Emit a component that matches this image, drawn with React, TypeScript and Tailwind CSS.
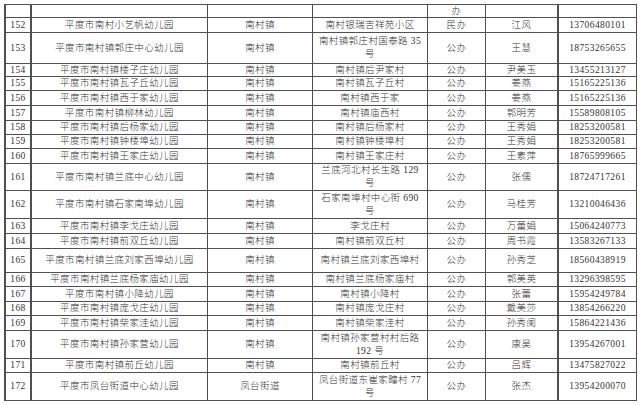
import React from "react";

type Row = {
  h: string;
  no: string;
  name: string;
  town: string;
  addr: React.ReactNode;
  type: string;
  head: string;
  phone: string;
};

const rows: Row[] = [
  { h: "h-[13px]", no: "", name: "", town: "", addr: "", type: "办", head: "", phone: "" },
  { h: "h-[15px]", no: "152", name: "平度市南村小艺帆幼儿园", town: "南村镇", addr: "南村银瑞吉祥苑小区", type: "民办", head: "江风", phone: "13706480101" },
  { h: "h-[31px]", no: "153", name: "平度市南村镇郭庄中心幼儿园", town: "南村镇", addr: <>南村镇郭庄村国泰路 35<br />号</>, type: "公办", head: "王慧", phone: "18753265655" },
  { h: "h-[13px]", no: "154", name: "平度市南村镇楼子庄幼儿园", town: "南村镇", addr: "南村镇后尹家村", type: "公办", head: "尹美玉", phone: "13455213127" },
  { h: "h-[14px]", no: "155", name: "平度市南村镇瓦子丘幼儿园", town: "南村镇", addr: "南村镇瓦子丘村", type: "公办", head: "姜燕", phone: "15165225136" },
  { h: "h-[15px]", no: "156", name: "平度市南村镇西于家幼儿园", town: "南村镇", addr: "南村镇西于家", type: "公办", head: "姜燕", phone: "15165225136" },
  { h: "h-[15px]", no: "157", name: "平度市南村镇柳林幼儿园", town: "南村镇", addr: "南村镇庙西村", type: "公办", head: "郭明芳", phone: "15589808105" },
  { h: "h-[14px]", no: "158", name: "平度市南村镇后杨家幼儿园", town: "南村镇", addr: "南村镇后杨家村", type: "公办", head: "王秀娟", phone: "18253200581" },
  { h: "h-[14px]", no: "159", name: "平度市南村镇钟楼埠幼儿园", town: "南村镇", addr: "南村镇钟楼埠村", type: "公办", head: "王秀娟", phone: "18253200581" },
  { h: "h-[15px]", no: "160", name: "平度市南村镇王家庄幼儿园", town: "南村镇", addr: "南村镇王家庄村", type: "公办", head: "王素萍", phone: "18765999665" },
  { h: "h-[27px]", no: "161", name: "平度市南村镇兰底中心幼儿园", town: "南村镇", addr: <>兰底河北村长生路 129<br />号</>, type: "公办", head: "张儒", phone: "18724717261" },
  { h: "h-[28px]", no: "162", name: "平度市南村镇石家南埠幼儿园", town: "南村镇", addr: <>石家南埠村中心街 690<br />号</>, type: "公办", head: "马桂芳", phone: "13210046436" },
  { h: "h-[15px]", no: "163", name: "平度市南村镇李戈庄幼儿园", town: "南村镇", addr: "李戈庄村", type: "公办", head: "万蕾娟", phone: "15064240773" },
  { h: "h-[15px]", no: "164", name: "平度市南村镇前双丘幼儿园", town: "南村镇", addr: "南村镇前双丘村", type: "公办", head: "周书霞", phone: "13583267133" },
  { h: "h-[24px]", no: "165", name: "平度市南村镇兰底刘家西埠幼儿园", town: "南村镇", addr: "南村镇兰底刘家西埠村", type: "公办", head: "孙秀芝", phone: "18560438919" },
  { h: "h-[14px]", no: "166", name: "平度市南村镇兰底杨家庙幼儿园", town: "南村镇", addr: "南村镇兰底杨家庙村", type: "公办", head: "郭美英", phone: "13296398595" },
  { h: "h-[15px]", no: "167", name: "平度市南村镇小降幼儿园", town: "南村镇", addr: "南村镇小降村", type: "公办", head: "张蕾", phone: "15954249784" },
  { h: "h-[14px]", no: "168", name: "平度市南村镇庞戈庄幼儿园", town: "南村镇", addr: "南村镇庞戈庄村", type: "公办", head: "戴美莎", phone: "13854266220" },
  { h: "h-[15px]", no: "169", name: "平度市南村镇柴家洼幼儿园", town: "南村镇", addr: "南村镇柴家洼村", type: "公办", head: "孙秀阑", phone: "15864221436" },
  { h: "h-[28px]", no: "170", name: "平度市南村镇孙家营幼儿园", town: "南村镇", addr: <>南村镇孙家营村村后路<br />192 号</>, type: "公办", head: "康昊", phone: "13954267001" },
  { h: "h-[14px]", no: "171", name: "平度市南村镇前丘幼儿园", town: "南村镇", addr: "南村镇前丘村", type: "公办", head: "吕辉", phone: "13475827022" },
  { h: "h-[28px]", no: "172", name: "平度市凤台街道中心幼儿园", town: "凤台街道", addr: <>凤台街道东崔家疃村 77<br />号</>, type: "公办", head: "张杰", phone: "13954200070" },
];

const cell =
  "flex items-center justify-center text-center border-b border-[#505050] leading-[13px] overflow-visible whitespace-nowrap";

export default function App() {
  return (
    <div
      className="w-[640px] h-[405px] bg-white pt-[4px] pl-[4px] text-[#333333] text-[9.5px] tracking-[0.4px] font-light"
      style={{ fontFamily: '"Liberation Serif", "Noto Sans CJK SC", serif' }}
    >
      <div className="grid grid-cols-[26px_176px_105px_115px_58px_73px_78px] w-[633px] border-l-2 border-t border-[#505050]">
        {rows.map((r, i) => (
          <React.Fragment key={i}>
            <div className={`${cell} ${r.h} border-r-2`}>{r.no}</div>
            <div className={`${cell} ${r.h} border-r`}>{r.name}</div>
            <div className={`${cell} ${r.h} border-r`}>{r.town}</div>
            <div className={`${cell} ${r.h} border-r`}>{r.addr}</div>
            <div className={`${cell} ${r.h} border-r`}>{r.type}</div>
            <div className={`${cell} ${r.h} border-r-2`}>{r.head}</div>
            <div className={`${cell} ${r.h} border-r`}>{r.phone}</div>
          </React.Fragment>
        ))}
      </div>
    </div>
  );
}
